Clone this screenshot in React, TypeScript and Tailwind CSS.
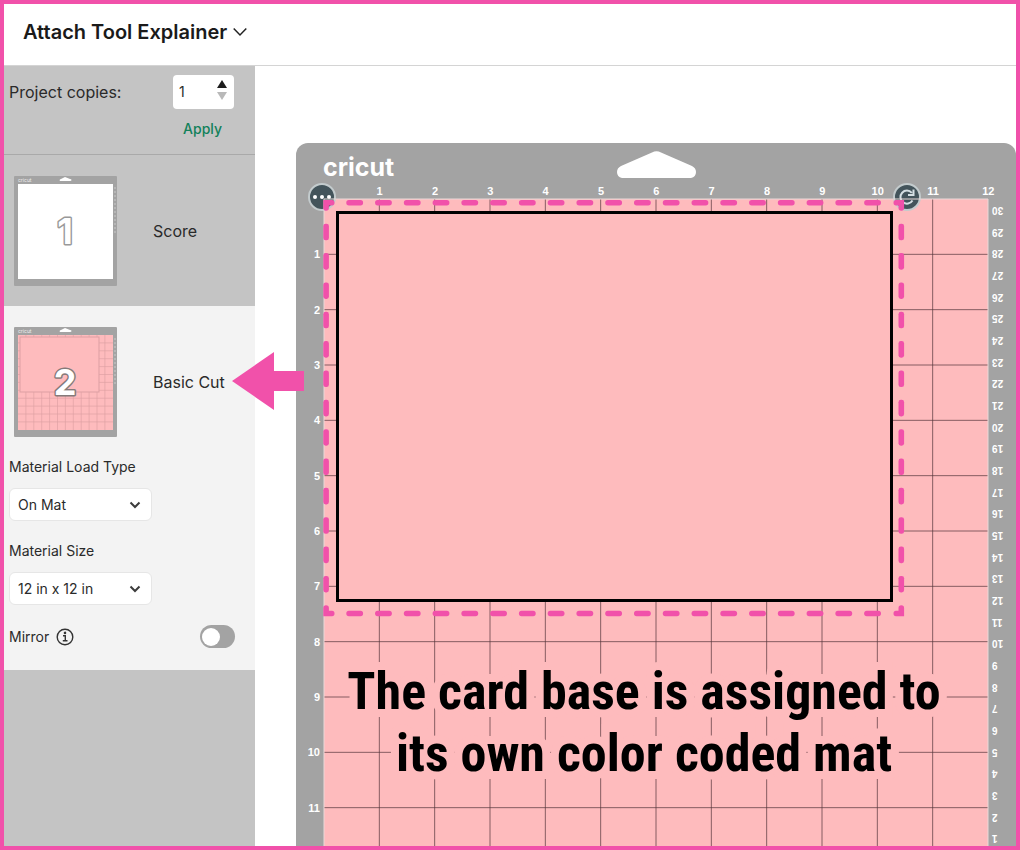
import React, { useState } from 'react';

const INCH = 664 / 12;
const topTicks = Array.from({ length: 12 }, (_, i) => i + 1);
const cmTicks = Array.from({ length: 30 }, (_, i) => 30 - i);
const dashColumns = Array.from({ length: 19 }, (_, i) => 22.3 + i * 28.77);
const dashRows = Array.from({ length: 13 }, (_, i) => 24.7 + i * 29.35);

const MatThumb = ({ number, filled }: { number: number; filled?: boolean }) => (
    <svg className="w-[103px] h-[110px] shrink-0" viewBox="0 0 103 110" aria-hidden="true">
        <rect width="103" height="110" rx="1" fill="#a3a3a3" />
        <text x="4" y="6" fontSize="5" fill="#eeeeee" fontFamily="Inter, sans-serif">cricut</text>
        <path d="M46 5 C45 4 46 3 47 3 L51 1 L56 3 C58 3 58 5 56 5 Z" fill="#fff" />
        <rect x="4" y="8" width="95" height="95" fill={filled ? '#febbbd' : '#fff'} />
        {filled && (
            <g stroke="#dd9fa3" strokeWidth="1" fill="none">
                {topTicks.slice(0, 11).map((n) => (
                    <path key={n} d={`M${4 + n * 7.9} 8 V103 M4 ${8 + n * 7.9} H99`} opacity=".65" />
                ))}
                <rect x="6" y="10" width="79" height="55" fill="#febbbd" />
            </g>
        )}
        {topTicks.map((n) => (
            <path key={n} d={`M100 ${8 + n * 4} h2`} stroke="#c9c9c9" strokeWidth="1" />
        ))}
        <text
            x="51"
            y="68"
            textAnchor="middle"
            fontSize="36"
            fontWeight="700"
            fontFamily="Inter, sans-serif"
            fill="#fff"
            stroke={filled ? '#857a7a' : '#999999'}
            strokeWidth="3"
            strokeLinejoin="round"
            paintOrder="stroke"
        >
            {number}
        </text>
    </svg>
);

const SelectBox = ({ id, label, value }: { id: string; label: string; value: string }) => (
    <div className="flex flex-col">
        <label htmlFor={id} className="text-sm leading-5">{label}</label>
        <div className="relative mt-[11px] w-[143px]">
            <select id={id} defaultValue={value} className="appearance-none w-full h-[33px] pl-2 pr-8 rounded-md border border-[#e6e6e6] bg-white text-sm">
                <option>{value}</option>
            </select>
            <svg className="absolute right-[11px] top-3 w-3 h-[10px] pointer-events-none" viewBox="0 0 12 10" fill="none" stroke="#3c3c3c" strokeWidth="2">
                <path d="M1.5 2.5 L6 7 L10.5 2.5" />
            </svg>
        </div>
    </div>
);

const Sidebar = () => {
    const [copies, setCopies] = useState(1);
    const [mirror, setMirror] = useState(false);

    return (
        <aside className="w-[251px] shrink-0 bg-[#c4c4c4] text-[#2a2a2a]">
            <section className="h-[89px] pt-[9px] pl-[5px] pr-[21px] border-b border-[#a9a9a9]">
                <div className="flex items-center justify-between">
                    <label htmlFor="copies" className="text-base">Project copies:</label>
                    <div className="flex items-center w-[61px] h-[34px] pl-[6px] pr-[7px] rounded-sm bg-white">
                        <input
                            id="copies"
                            type="text"
                            inputMode="numeric"
                            value={copies}
                            onChange={(e) => setCopies(Number(e.target.value) || 1)}
                            className="w-0 flex-1 text-sm outline-none"
                        />
                        <div className="flex flex-col gap-1 pb-1">
                            <button type="button" aria-label="More copies" onClick={() => setCopies(copies + 1)}>
                                <svg className="w-[10px] h-2" viewBox="0 0 10 8"><path d="M5 0 L10 8 H0 Z" fill="#1c1c1c" /></svg>
                            </button>
                            <button type="button" aria-label="Fewer copies" onClick={() => setCopies(Math.max(1, copies - 1))}>
                                <svg className="w-[10px] h-2" viewBox="0 0 10 8"><path d="M5 8 L10 0 H0 Z" fill="#b9b9b9" /></svg>
                            </button>
                        </div>
                    </div>
                </div>
                <div className="flex justify-end pr-3 pt-[10px]">
                    <button type="button" className="text-sm leading-5 font-medium text-[#12815a]">Apply</button>
                </div>
            </section>

            <button type="button" className="flex items-center w-full h-[151px] pl-[10px] gap-9 text-base">
                <MatThumb number={1} />
                <span>Score</span>
            </button>

            <section className="relative h-[364px] bg-[#f3f3f3]">
                <button type="button" className="flex items-center w-full h-[151px] pl-[10px] gap-9 text-base">
                    <MatThumb number={2} filled />
                    <span>Basic Cut</span>
                </button>
                <svg className="absolute z-10 left-[228px] top-[46px] w-[72px] h-[58px]" viewBox="0 0 72 58" aria-hidden="true">
                    <path d="M0 29 L42 0 V19 H72 V39 H42 V58 Z" fill="#f151aa" />
                </svg>
                <div className="flex flex-col gap-5 pl-[5px] pr-5">
                    <SelectBox id="load-type" label="Material Load Type" value="On Mat" />
                    <SelectBox id="size" label="Material Size" value="12 in x 12 in" />
                    <div className="flex items-center justify-between">
                        <div className="flex items-center gap-[7px]">
                            <label htmlFor="mirror" className="text-sm">Mirror</label>
                            <svg className="w-[18px] h-[18px]" viewBox="0 0 18 18" fill="none" stroke="#333" strokeWidth="1.4">
                                <circle cx="9" cy="9" r="7.8" />
                                <path d="M7 7.7 H9.3 V12.8 M6.8 12.8 H11.5" />
                                <circle cx="9" cy="4.9" r=".6" fill="#333" />
                            </svg>
                        </div>
                        <input
                            id="mirror"
                            type="checkbox"
                            role="switch"
                            checked={mirror}
                            onChange={() => setMirror(!mirror)}
                            className="appearance-none flex items-center w-[35px] h-[23px] p-[2px] rounded-full bg-[#a3a3a3] before:block before:w-[18px] before:h-[18px] before:rounded-full before:bg-white checked:bg-[#12815a] checked:justify-end"
                        />
                    </div>
                </div>
            </section>
        </aside>
    );
}

const MatDrawing = () => (
    <svg className="absolute inset-0 w-full h-full overflow-visible pointer-events-none" viewBox="0 0 664 664" aria-hidden="true">
        <g stroke="#52343a" strokeOpacity=".7" strokeWidth="1">
            {topTicks.slice(0, 11).map((n) => (
                <path key={n} d={`M${n * INCH} 0 V664 M0 ${n * INCH} H664`} />
            ))}
        </g>
        <path d="M0 664 V0 H664 V664" fill="none" stroke="#e9d8d8" strokeWidth="1" />
        <rect x="13.5" y="13.5" width="554" height="388" fill="#febbbd" stroke="#000" strokeWidth="3" />
        <g fill="#f151aa">
            {dashColumns.map((x) => (
                <React.Fragment key={x}>
                    <rect x={x} y="1" width="16.8" height="5.4" rx="2.6" />
                    <rect x={x} y="411.8" width="16.8" height="5.4" rx="2.6" />
                </React.Fragment>
            ))}
            {dashRows.map((y) => (
                <React.Fragment key={y}>
                    <rect x="-.7" y={y} width="5.6" height="16.6" rx="2.4" />
                    <rect x="574.5" y={y} width="5.6" height="16.6" rx="2.4" />
                </React.Fragment>
            ))}
            <path d="M-.7 1 H8 Q10.5 1 10.5 3.7 Q10.5 6.4 8 6.4 H4.9 V9 Q4.9 11.7 2 11.7 Q-.7 11.7 -.7 9 Z" />
            <path d="M580.1 1 H572 Q569.5 1 569.5 3.7 Q569.5 6.4 572 6.4 H574.5 V9 Q574.5 11.7 577.3 11.7 Q580.1 11.7 580.1 9 Z" />
            <path d="M-.7 417.2 H8 Q10.5 417.2 10.5 414.5 Q10.5 411.8 8 411.8 H4.9 V409 Q4.9 406.3 2 406.3 Q-.7 406.3 -.7 409 Z" />
            <path d="M580.1 417.2 H572 Q569.5 417.2 569.5 414.5 Q569.5 411.8 572 411.8 H574.5 V409 Q574.5 406.3 577.3 406.3 Q580.1 406.3 580.1 409 Z" />
        </g>
    </svg>
);

const Mat = () => (
    <div className="rounded-t-xl bg-[#a3a3a3] text-white font-['Liberation_Sans',Arial,sans-serif]">
        <div className="grid grid-cols-3 h-[41px] px-[27px]">
            <span className="pt-2 text-[25px] leading-8 font-bold font-[Inter,sans-serif]">cricut</span>
            <svg className="justify-self-center mt-2 w-[79px] h-[27px]" viewBox="0 0 79 27" aria-hidden="true">
                <path d="M5 27 Q0 26 0 21 Q0 17 4 15 L35 1.5 Q39.5 -1 44 1.5 L75 15 Q79 17 79 21 Q79 26 74 27 Z" fill="#fff" />
            </svg>
        </div>
        <div className="grid grid-cols-12 h-[15px] pl-[56px] text-[11px] leading-[15px] font-bold text-center">
            {topTicks.map((n) => <span key={n}>{n}</span>)}
        </div>
        <div className="flex">
            <div className="flex flex-col w-7 pr-1 text-[11px] leading-3 font-bold text-right">
                {topTicks.map((n) => (
                    <div key={n} className="flex-1 flex items-end justify-end">
                        {n < 12 && <span className="translate-y-1/2">{n}</span>}
                    </div>
                ))}
            </div>
            <div className="relative flex-1 aspect-square bg-[#febbbd]">
                <button type="button" aria-label="Mat options" className="absolute -left-4 -top-4 w-7 h-7 rounded-full bg-[#43545b] border-2 border-[#c3cbcd]">
                    <svg className="w-6 h-6" viewBox="0 0 24 24" fill="#fff">
                        <circle cx="5" cy="12" r="2" /><circle cx="12" cy="12" r="2" /><circle cx="19" cy="12" r="2" />
                    </svg>
                </button>
                <button type="button" aria-label="Rotate" className="absolute left-[569px] -top-4 w-7 h-7 rounded-full bg-[#43545b] border-2 border-[#c3cbcd]">
                    <svg className="w-6 h-6" viewBox="0 0 24 24" fill="none" stroke="#d5dfe3" strokeWidth="2">
                        <path d="M17.5 15.5 A6.5 6.5 0 1 1 16.8 7.8 M18.5 4.5 V10 H13" />
                    </svg>
                </button>
                <MatDrawing />
                <p className="absolute inset-x-0 top-[462px] pr-6 text-center text-black text-[52px] leading-[62px] font-bold whitespace-nowrap font-['Roboto_Condensed','Liberation_Sans_Narrow',sans-serif] [-webkit-text-stroke:16px_#febbbd] [paint-order:stroke_fill]">
                    The card base is assigned to<br />its own color coded mat
                </p>
            </div>
            <div className="flex flex-col w-7 pl-1 pb-[14px] text-[10px] leading-3 font-bold">
                {cmTicks.map((n) => (
                    <div key={n} className="flex-1 flex items-center">
                        <span className="rotate-180">{n}</span>
                    </div>
                ))}
            </div>
        </div>
    </div>
);

const App: React.FC = () => {
    return (
        <div className="flex flex-col h-screen overflow-hidden bg-white border-4 border-[#f151aa] font-[Inter,sans-serif]">
            <header className="flex items-center h-[62px] shrink-0 pl-[19px] pb-[5px] border-b border-[#d4d4d4]">
                <button type="button" className="flex items-center gap-[6px] text-xl font-semibold text-[#1a1a1a]">
                    Attach Tool Explainer
                    <svg className="w-[14px] h-[10px]" viewBox="0 0 14 10" fill="none" stroke="#222" strokeWidth="1.5">
                        <path d="M.7 1.5 L7 8 L13.3 1.5" />
                    </svg>
                </button>
            </header>
            <div className="flex flex-1 min-h-0">
                <Sidebar />
                <main className="flex-1 pl-[41px] pt-[77px] overflow-hidden">
                    <Mat />
                </main>
            </div>
        </div>
    );
}

export default App;
